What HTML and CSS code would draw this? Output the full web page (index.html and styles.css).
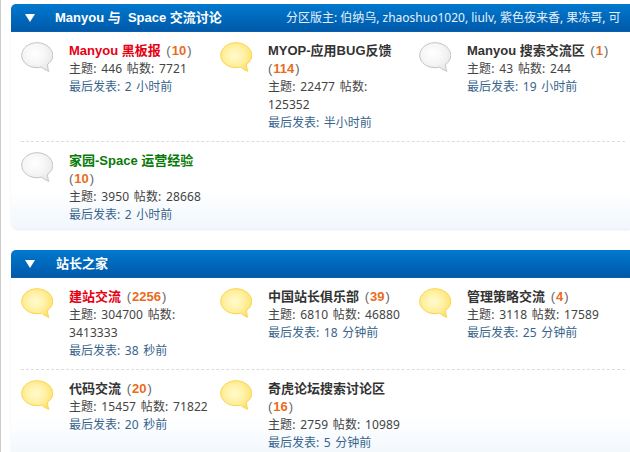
FILE: index.html
```html
<!DOCTYPE html>
<html lang="zh">
<head>
<meta charset="utf-8">
<title>论坛</title>
<link rel="stylesheet" href="styles.css">
</head>
<body>
<svg class="defs" width="0" height="0" aria-hidden="true">
  <defs>
    <radialGradient id="gray" cx="0.42" cy="0.38" r="0.68">
      <stop offset="0" stop-color="#ffffff"/><stop offset="0.5" stop-color="#f6f6f6"/><stop offset="1" stop-color="#e6e6e6"/>
    </radialGradient>
    <radialGradient id="yellow" cx="0.45" cy="0.45" r="0.62">
      <stop offset="0" stop-color="#fffbd0"/><stop offset="0.55" stop-color="#fff0a0"/><stop offset="1" stop-color="#ffdf62"/>
    </radialGradient>
    <symbol id="bubble" viewBox="0 0 32 30">
      <path d="M16 .7C7.6.7.7 6.4.7 13.3c0 6.9 6.9 12.4 15.3 12.4 1.6 0 3.1-.2 4.5-.6 2 1.600 5 3.600 7.500 4.200-1-1.700-1.500-4.600-1.400-7.100 3.400-2.300 5.200-5.300 5.200-8.900C31.800 6.400 24.400.7 16 .7z"/>
    </symbol>
  </defs>
</svg>
<main class="page">
  <section class="group">
    <header class="group-head">
      <span class="arrow"></span>
      <h2 class="group-title">Manyou 与&nbsp; Space 交流讨论</h2>
      <p class="mods">分区版主: 伯纳乌, zhaoshuo1020, liulv, 紫色夜来香, 果冻哥, 可</p>
    </header>
    <div class="group-body">
      <div class="row">
        <article class="forum">
          <svg class="bubble gray"><use href="#bubble"/></svg>
          <div class="info">
            <h3 class="name"><a class="red">Manyou 黑板报</a> <span class="paren">(<em>10</em>)</span></h3>
            <p class="stats">主题: 446 帖数: 7721</p>
            <p class="last">最后发表: 2 小时前</p>
          </div>
        </article>
        <article class="forum">
          <svg class="bubble yellow"><use href="#bubble"/></svg>
          <div class="info">
            <h3 class="name"><a>MYOP-应用BUG反馈</a> <span class="paren">(<em>114</em>)</span></h3>
            <p class="stats">主题: 22477 帖数: 125352</p>
            <p class="last">最后发表: 半小时前</p>
          </div>
        </article>
        <article class="forum">
          <svg class="bubble gray"><use href="#bubble"/></svg>
          <div class="info">
            <h3 class="name"><a>Manyou 搜索交流区</a> <span class="paren">(<em>1</em>)</span></h3>
            <p class="stats">主题: 43 帖数: 244</p>
            <p class="last">最后发表: 19 小时前</p>
          </div>
        </article>
      </div>
      <div class="row">
        <article class="forum">
          <svg class="bubble gray"><use href="#bubble"/></svg>
          <div class="info">
            <h3 class="name"><a class="green">家园-Space 运营经验</a> <span class="paren">(<em>10</em>)</span></h3>
            <p class="stats">主题: 3950 帖数: 28668</p>
            <p class="last">最后发表: 2 小时前</p>
          </div>
        </article>
      </div>
    </div>
  </section>
  <section class="group">
    <header class="group-head">
      <span class="arrow"></span>
      <h2 class="group-title second">站长之家</h2>
    </header>
    <div class="group-body">
      <div class="row">
        <article class="forum">
          <svg class="bubble yellow"><use href="#bubble"/></svg>
          <div class="info">
            <h3 class="name"><a class="red">建站交流</a> <span class="paren">(<em>2256</em>)</span></h3>
            <p class="stats">主题: 304700 帖数: 3413333</p>
            <p class="last">最后发表: 38 秒前</p>
          </div>
        </article>
        <article class="forum">
          <svg class="bubble yellow"><use href="#bubble"/></svg>
          <div class="info">
            <h3 class="name"><a>中国站长俱乐部</a> <span class="paren">(<em>39</em>)</span></h3>
            <p class="stats">主题: 6810 帖数: 46880</p>
            <p class="last">最后发表: 18 分钟前</p>
          </div>
        </article>
        <article class="forum">
          <svg class="bubble yellow"><use href="#bubble"/></svg>
          <div class="info">
            <h3 class="name"><a>管理策略交流</a> <span class="paren">(<em>4</em>)</span></h3>
            <p class="stats">主题: 3118 帖数: 17589</p>
            <p class="last">最后发表: 25 分钟前</p>
          </div>
        </article>
      </div>
      <div class="row">
        <article class="forum">
          <svg class="bubble yellow"><use href="#bubble"/></svg>
          <div class="info">
            <h3 class="name"><a>代码交流</a> <span class="paren">(<em>20</em>)</span></h3>
            <p class="stats">主题: 15457 帖数: 71822</p>
            <p class="last">最后发表: 20 秒前</p>
          </div>
        </article>
        <article class="forum">
          <svg class="bubble yellow"><use href="#bubble"/></svg>
          <div class="info">
            <h3 class="name"><a>奇虎论坛搜索讨论区</a> <span class="paren">(<em>16</em>)</span></h3>
            <p class="stats">主题: 2759 帖数: 10989</p>
            <p class="last">最后发表: 5 分钟前</p>
          </div>
        </article>
      </div>
    </div>
  </section>
</main>
</body>
</html>
```
FILE: styles.css
```css
html, body {
  margin: 0;
  padding: 0;
  height: 452px;
  overflow: hidden;
  background: #fff;
}
body {
  font: 12px/18px "Noto Sans", "Noto Sans CJK SC", sans-serif;
  word-spacing: 1.5px;
  color: #444;
}
.defs { display: block; }
h2, h3, p { margin: 0; }
.page {
  border-left: 1px solid #ccc;
  padding: 4px 0 0 10px;
  height: 448px;
  overflow: hidden;
}
.group { margin-bottom: 21px; }
.group-head {
  display: flex;
  align-items: center;
  height: 28px;
  padding-left: 14px;
  border-radius: 5px 0 0 0;
  background: linear-gradient(#0079cf, #0058a8);
  color: #fff;
  white-space: nowrap;
  overflow: hidden;
}
.arrow {
  flex: none;
  width: 0;
  height: 0;
  border-left: 5px solid transparent;
  border-right: 5px solid transparent;
  border-top: 8px solid #fff;
  margin-right: 20px;
}
.group-title {
  font: bold 13px/18px "Liberation Sans", "Noto Sans CJK SC", sans-serif;
  word-spacing: 0;
}
.second { margin-left: 1px; }
.mods { margin-left: 64px; color: #e6f1fb; word-spacing: 0; }
.group-body {
  padding: 0 5px 5px 10px;
  border-radius: 0 0 0 7px;
  background: linear-gradient(#fff calc(100% - 40px), #f1f7fd);
  box-shadow: 0 1px 2px #e6ebf0;
}
.row {
  display: grid;
  grid-template-columns: repeat(3, 199px);
  padding: 10px 0 9px;
  border-bottom: 1px dashed #ddd;
}
.row:last-child { border-bottom: 0; padding-bottom: 0; }
.forum { display: flex; }
.bubble {
  flex: none;
  width: 32px;
  height: 30px;
  margin-right: 16px;
}
.gray { fill: url(#gray); stroke: #c4c4c4; stroke-width: 1; }
.yellow { fill: url(#yellow); stroke: #fbd452; stroke-width: 1; }
.info { width: 144.5px; }
.name {
  font: bold 13px/18px "Liberation Sans", "Noto Sans CJK SC", sans-serif;
  word-spacing: 0;
  color: #333;
}
.name a { margin-right: 2px; }
.red { color: #e60012; }
.green { color: #067a06; }
.paren { font-weight: normal; color: #666; }
.paren em { margin: 0 1px; font-style: normal; font-weight: bold; color: #ea6b1c; }
.stats { color: #444; letter-spacing: .1px; }
.last { color: #38648c; }
```
